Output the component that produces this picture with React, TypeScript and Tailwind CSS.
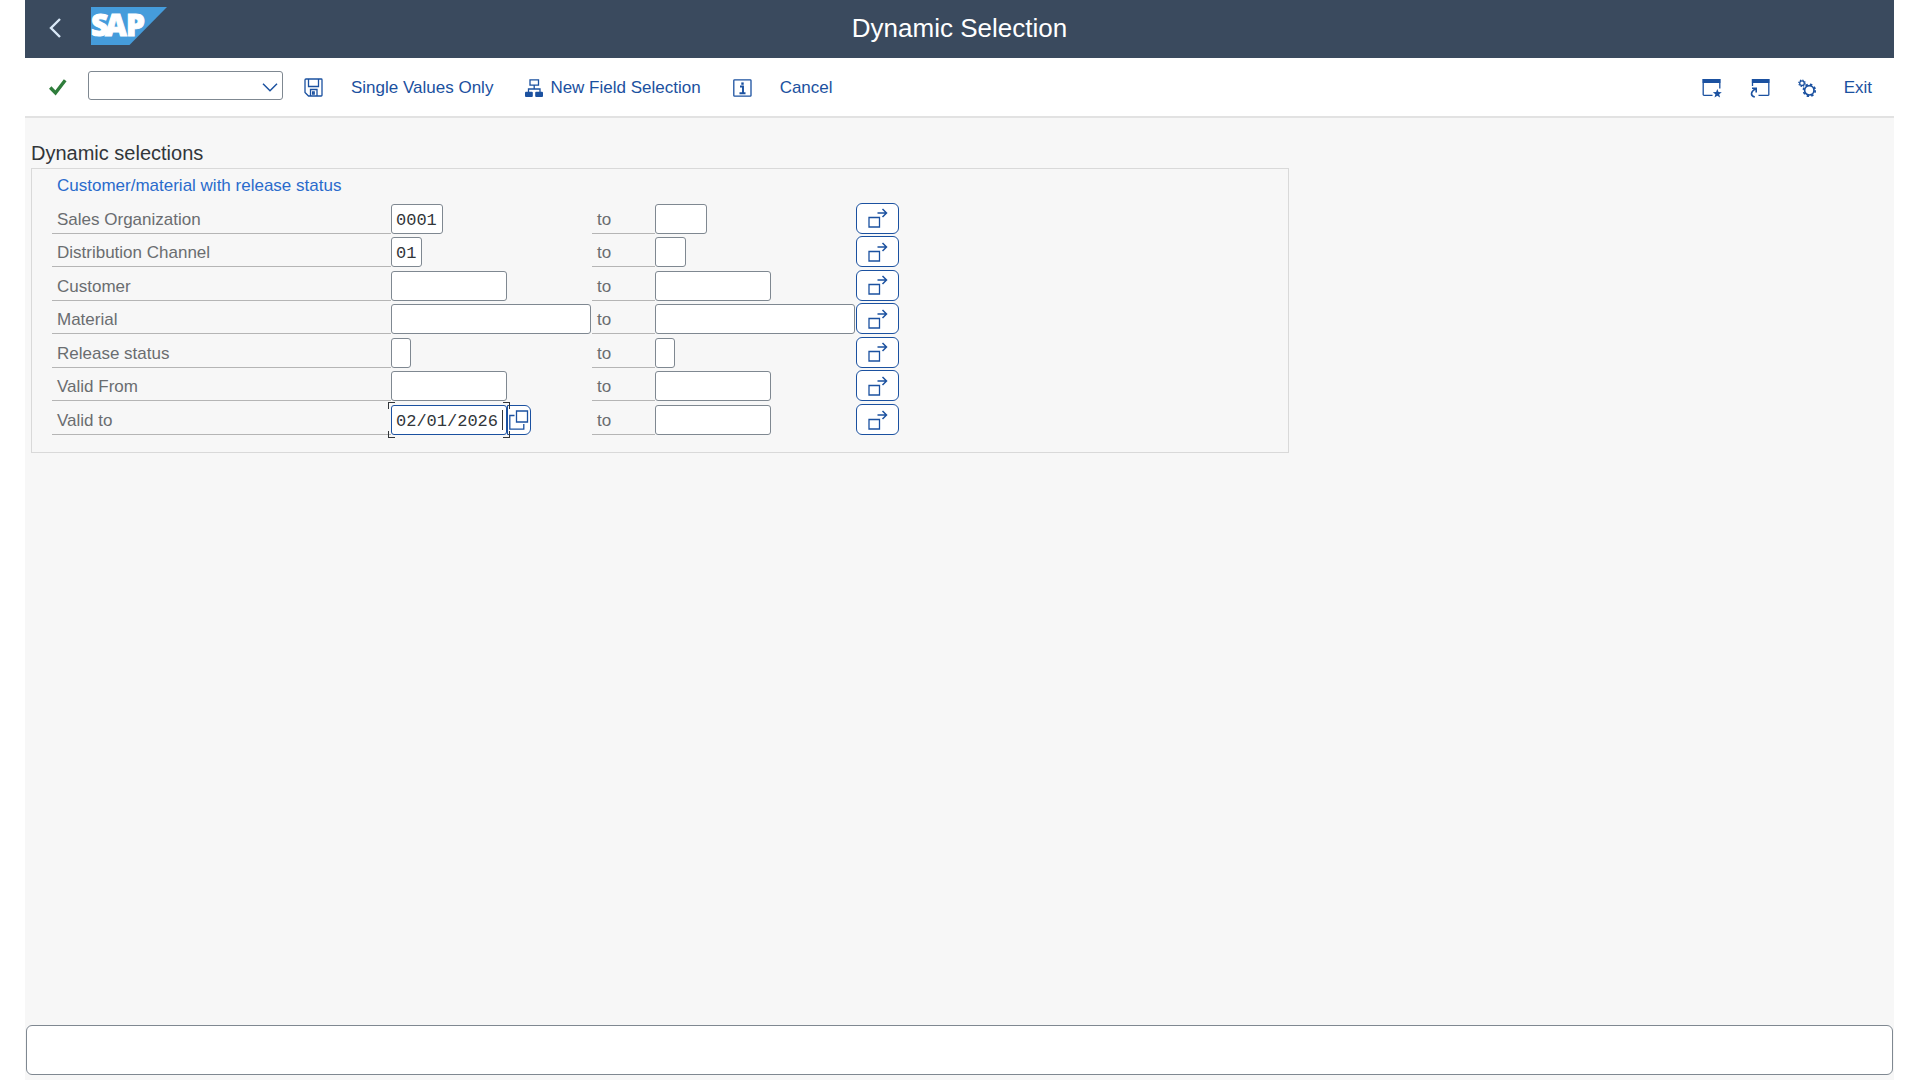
import { useState } from 'react';

const rows = [
  { id: 'vkorg', label: 'Sales Organization', width: 'w-[52px]', value: '0001' },
  { id: 'vtweg', label: 'Distribution Channel', width: 'w-[31px]', value: '01' },
  { id: 'kunnr', label: 'Customer', width: 'w-[116px]', value: '' },
  { id: 'matnr', label: 'Material', width: 'w-[200px]', value: '' },
  { id: 'kfrst', label: 'Release status', width: 'w-5', value: '' },
  { id: 'datab', label: 'Valid From', width: 'w-[116px]', value: '' },
  {
    id: 'datbi',
    label: 'Valid to',
    width: 'w-[116px]',
    value: '02/01/2026',
    active: true
  }
];

function SapLogo() {
  return (
    <svg className="overflow-visible" width="76" height="38" viewBox="0 0 76 38" aria-label="SAP">
      <path d="M0 0h76L38.500 38H0z" fill="#459cdb" />
      <text
        x="0 14 35"
        y="29"
        fill="#fff"
        stroke="#fff"
        strokeWidth="1"
        fontFamily="Open Sans, sans-serif"
        fontWeight="800"
        fontSize="30"
      >
        SAP
      </text>
    </svg>
  );
}

function SaveIcon() {
  return (
    <svg width="19" height="19" viewBox="0 0 19 19" fill="none" stroke="currentColor" strokeWidth="1.3">
      <path d="M2 1h15.2a.8.8 0 0 1 .8.8v15.400a.8.8 0 0 1-.8.8H4.500L1 14.500V2a1 1 0 0 1 1-1z" />
      <path d="M4.500 1v7.500h10V1M6.500 18v-6.500h6.500V18" />
      <path d="M8.600 14h1.600v2H8.600z" />
    </svg>
  );
}

function HierarchyIcon() {
  return (
    <svg width="18" height="18" viewBox="0 0 18 18" fill="none" stroke="currentColor" strokeWidth="1.3">
      <path d="M5 .8h8.500v5.400H5zM9.200 6.200V10M3.500 13v-3h11.500v3" />
      <rect x="0" y="12.800" width="7.800" height="5.200" rx="1" fill="currentColor" stroke="none" />
      <rect x="10.200" y="12.800" width="7.800" height="5.200" rx="1" fill="currentColor" stroke="none" />
    </svg>
  );
}

function InfoIcon() {
  return (
    <svg width="19" height="18" viewBox="0 0 19 18" fill="none" stroke="currentColor" strokeWidth="1.3">
      <rect x=".8" y=".8" width="17.200" height="16.400" rx=".8" />
      <path d="M7 7.500h3v6.500M6.500 14.200h6" strokeWidth="1.900" />
      <path d="M8.300 3.400h2.400v2.400H8.300z" fill="currentColor" stroke="none" />
    </svg>
  );
}

function NewSessionIcon() {
  return (
    <svg width="20" height="20" viewBox="0 0 20 20" fill="none" stroke="currentColor" strokeWidth="1.3">
      <path d="M10.500 17.300H2a.8.8 0 0 1-.8-.8V1.700h16.600V10.500" />
      <path d="M.6 1h17.800v4H.6z" fill="currentColor" stroke="none" />
      <path d="m15.300 11 1.200 3.100 3.300.1-2.600 2.100.9 3.200-2.800-1.800-2.800 1.800.9-3.200-2.600-2.100 3.300-.1z" fill="currentColor" stroke="none" />
    </svg>
  );
}

function ShortcutIcon() {
  return (
    <svg width="20" height="20" viewBox="0 0 20 20" fill="none" stroke="currentColor" strokeWidth="1.3">
      <path d="M8.500 17.300h9.700a.6.6 0 0 0 .6-.6V1.700H2.500V8" />
      <path d="M1.900 1h17.500v4H1.900z" fill="currentColor" stroke="none" />
      <path d="M4.800 19C.5 18 0 14 5.800 10.800M2 10.300h4.200v4.200" strokeWidth="1.600" />
    </svg>
  );
}

function SettingsIcon() {
  return (
    <svg width="18" height="18" viewBox="0 0 18 18" fill="none" stroke="currentColor">
      <circle cx="11.300" cy="11.300" r="4.700" strokeWidth="1.700" />
      <circle cx="11.300" cy="11.300" r="5.900" strokeWidth="1.700" strokeDasharray="2.400 2.230" />
      <circle cx="4" cy="4.200" r="2.300" strokeWidth="1.300" />
      <circle cx="4" cy="4.200" r="3.200" strokeWidth="1.200" strokeDasharray="1.300 1.210" />
    </svg>
  );
}

function MultipleIcon() {
  return (
    <svg width="20" height="20" viewBox="0 0 20 20" fill="none" stroke="currentColor" strokeWidth="1.300">
      <path d="M1 9.500h10.500v9.500H1z" />
      <path d="M9.500 5h9M14.500 1l4 4-4 4" strokeWidth="1.500" />
    </svg>
  );
}

function ToolbarButton({ label, children }) {
  return (
    <button type="button" aria-label={label} className="flex items-center gap-[7px] whitespace-nowrap">
      {children}
    </button>
  );
}

function ActiveCorners() {
  return (
    <div className="pointer-events-none absolute -inset-[3px] text-[#32363a]">
      <span className="absolute top-0 left-0 size-[7px] border-t border-l" />
      <span className="absolute top-0 right-0 size-[7px] border-t border-r" />
      <span className="absolute bottom-0 left-0 size-[7px] border-b border-l" />
      <span className="absolute right-0 bottom-0 size-[7px] border-r border-b" />
    </div>
  );
}

function Field({ id, width, defaultValue, label, active }) {
  return (
    <div className="flex items-end">
      <div className="relative flex">
        <input
          id={id}
          aria-label={label}
          defaultValue={defaultValue}
          className={`${width} ${
            active ? 'border-[#1b51a0]' : 'border-[#7f8891]'
          } h-[30px] rounded-[3px] border bg-white pt-[3px] pl-1 font-['Liberation_Mono',monospace] text-[17px] text-[#32363a] outline-none`}
        />
        {active && <span className="absolute top-[5px] right-1 h-5 w-px bg-[#32363a]" />}
        {active && <ActiveCorners />}
      </div>
      {active && (
        <button
          type="button"
          aria-label="Value help"
          className="flex h-[30px] w-6 items-center justify-center rounded-r-md border border-[#1b51a0] bg-white text-[#1b51a0]"
        >
          <svg width="20" height="20" viewBox="0 0 20 20" fill="none" stroke="currentColor" strokeWidth="1.3">
            <path d="M7.500 1h11v11h-11zM5.500 5.500H.8v13.700h14V14" />
          </svg>
        </button>
      )}
    </div>
  );
}

export default function App() {
  const [command, setCommand] = useState('');

  return (
    <div className="min-h-screen bg-white pr-[26px] pl-[25px] font-['Liberation_Sans',sans-serif] text-[17px] text-[#1b51a0]">
      <div className="flex min-h-screen flex-col bg-[#f7f7f7]">
        <header className="grid h-[58px] grid-cols-[1fr_auto_1fr] items-center bg-[#3a4a5e] px-6 pb-0.5 text-white">
          <div className="flex items-center gap-[30px]">
            <button type="button" aria-label="Back">
              <svg width="12" height="20" viewBox="0 0 12 20" fill="none" stroke="#d9e8f7" strokeWidth="2.400">
                <path d="M11 1 2 10l9 9" />
              </svg>
            </button>
            <div className="mb-1">
              <SapLogo />
            </div>
          </div>
          <h1 className="text-[26px] leading-8">Dynamic Selection</h1>
        </header>

        <div className="flex h-[60px] items-center justify-between border-b-2 border-[#e2e2e2] bg-white pt-px pr-[22px] pl-6">
          <div className="flex items-center gap-8">
            <div className="flex items-center gap-7">
              <div className="flex items-center gap-[21px]">
                <ToolbarButton label="Enter">
                  <svg width="18" height="17" viewBox="0 0 18 17" fill="none" stroke="#2f7d3b" strokeWidth="3.400">
                    <path d="m1.200 8.500 5.300 5.500L16.200 1.200" />
                  </svg>
                </ToolbarButton>
                <div className="relative mb-1">
                  <select
                    aria-label="Command"
                    value={command}
                    onChange={(e) => setCommand(e.target.value)}
                    className="block h-[29px] w-[195px] appearance-none rounded-[3px] border border-[#7f8891] bg-white"
                  >
                    <option value=""></option>
                  </select>
                  <svg
                    className="pointer-events-none absolute top-3 right-[5px]"
                    width="16"
                    height="9"
                    viewBox="0 0 16 9"
                    fill="none"
                    stroke="currentColor"
                    strokeWidth="1.500"
                  >
                    <path d="m1 .8 7 7 7-7" />
                  </svg>
                </div>
                <ToolbarButton label="Save">
                  <SaveIcon />
                </ToolbarButton>
              </div>
              <ToolbarButton label="Single Values Only">Single Values Only</ToolbarButton>
            </div>
            <ToolbarButton label="New Field Selection">
              <HierarchyIcon />
              New Field Selection
            </ToolbarButton>
            <div className="flex items-center gap-7">
              <ToolbarButton label="Information">
                <InfoIcon />
              </ToolbarButton>
              <ToolbarButton label="Cancel">Cancel</ToolbarButton>
            </div>
          </div>
          <div className="flex items-center gap-7">
            <ToolbarButton label="New window">
              <NewSessionIcon />
            </ToolbarButton>
            <ToolbarButton label="Create shortcut">
              <ShortcutIcon />
            </ToolbarButton>
            <ToolbarButton label="Settings">
              <SettingsIcon />
            </ToolbarButton>
            <ToolbarButton label="Exit">Exit</ToolbarButton>
          </div>
        </div>

        <main className="flex-1 px-1.5 pt-[22px]">
          <h2 className="pb-0.5 text-xl leading-[26px] text-[#32363a]">Dynamic selections</h2>
          <section className="w-full max-w-[1258px] border border-[#d9d9d9] pb-[17px] pl-5">
            <h3 className="pt-0.5 pl-[5px] leading-[29px] text-[#2a6bcc]">Customer/material with release status</h3>
            <div className="grid h-[235px] grid-rows-7">
              {rows.map((row) => (
                <div
                  key={row.id}
                  className="grid grid-cols-[339px_201px_63px_201px_43px] items-end text-[#6a6d70]"
                >
                  <label htmlFor={row.id} className="border-b border-[#b5b5b5] pl-[5px] leading-[26px]">
                    {row.label}
                  </label>
                  <Field
                    id={row.id}
                    width={row.width}
                    defaultValue={row.value}
                    label={row.label}
                    active={row.active}
                  />
                  <label htmlFor={`${row.id}-to`} className="border-b border-[#b5b5b5] pl-[5px] leading-[26px]">
                    to
                  </label>
                  <Field
                    id={`${row.id}-to`}
                    width={row.width}
                    defaultValue=""
                    label={`${row.label} to`}
                    active={false}
                  />
                  <button
                    type="button"
                    aria-label={`Multiple selection ${row.label}`}
                    className="flex h-[31px] items-center justify-center rounded-md border border-[#1b51a0] bg-white text-[#1b51a0]"
                  >
                    <MultipleIcon />
                  </button>
                </div>
              ))}
            </div>
          </section>
        </main>

        <footer className="px-px pb-[5px]">
          <div role="status" className="h-[50px] rounded-md border border-[#7f8891] bg-white" />
        </footer>
      </div>
    </div>
  );
}
